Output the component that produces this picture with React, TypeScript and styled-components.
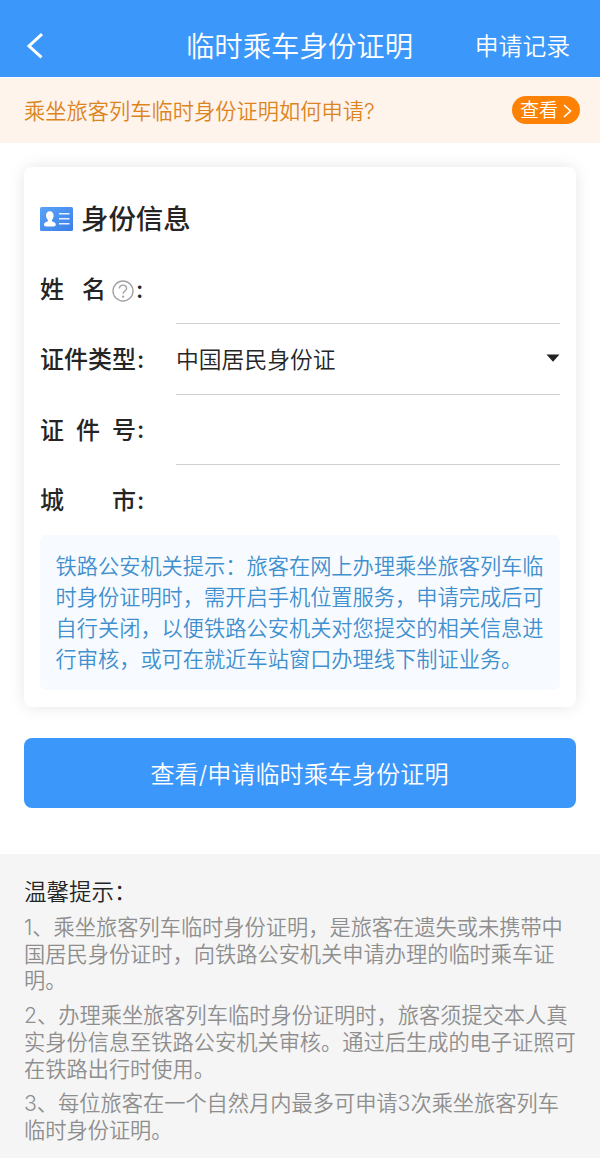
import React from 'react';
import styled, { createGlobalStyle } from 'styled-components';

const GlobalStyle = createGlobalStyle`
  * { box-sizing: border-box; }
  body {
    margin: 0;
    background: #fff;
    color: #252525;
    font-family: Inter, "Noto Sans CJK SC", sans-serif;
    font-weight: 350;
  }
  p, h1, h2 { margin: 0; font-weight: inherit; }
  button { font: inherit; border: 0; cursor: pointer; }
`;

const Page = styled.div`
  width: 600px;
  height: 1158px;
  overflow: hidden;
  display: flex;
  flex-direction: column;
`;

const Header = styled.header`
  flex: none;
  height: 77px;
  padding: 15px 30px 0 26px;
  display: grid;
  grid-template-columns: 123px 1fr 120px;
  align-items: center;
  background: #3b98fa;
  color: #fff;
`;

const HeaderTitle = styled.h1`
  padding-top: 2px;
  font-size: 28.4px;
  line-height: 40px;
  text-align: center;
  white-space: nowrap;
`;

const HeaderLink = styled.a`
  padding-top: 1px;
  font-size: 23.8px;
  line-height: 40px;
  text-align: right;
  white-space: nowrap;
`;

const Notice = styled.section`
  flex: none;
  height: 65px;
  margin-top: 1px;
  padding: 0 20px 1px 24px;
  display: flex;
  align-items: center;
  justify-content: space-between;
  background: #fff4ec;
  color: #dc8420;
  font-size: 21.25px;
  white-space: nowrap;
`;

const NoticeText = styled.p`
  padding-bottom: 1px;
`;

const NoticeButton = styled.button`
  width: 68px;
  height: 28px;
  padding: 1px 8px 0;
  display: flex;
  align-items: center;
  justify-content: space-between;
  border-radius: 14px;
  background: #fd8204;
  color: #fff;
  font-size: 19px;
  line-height: 28px;
`;

const Card = styled.section`
  flex: none;
  margin: 24px 24px 0;
  padding: 34px 16px 16px;
  height: 540px;
  border-radius: 8px;
  background: #fff;
  box-shadow: 0 0 16px rgba(0, 0, 0, 0.1);
`;

const CardTitle = styled.h2`
  height: 36px;
  margin-bottom: 17px;
  display: flex;
  align-items: center;
  gap: 8px;
  font-size: 27.4px;
  font-weight: 500;
  line-height: 36px;
`;

const Row = styled.div`
  height: 70.3px;
  display: grid;
  grid-template-columns: 136px 1fr;
`;

const Label = styled.div`
  width: 106px;
  padding-bottom: 3px;
  display: flex;
  align-items: center;
  font-size: 24px;
  font-weight: 500;
`;

const LabelText = styled.span<{ $width: number }>`
  width: ${(p) => p.$width}px;
  display: flex;
  justify-content: space-between;
`;

const Colon = styled.span`
  padding: 3px 0 0 1px;
`;

const HelpIcon = styled.svg`
  margin: 7px 1px 0 6px;
`;

const Field = styled.div<{ $lined?: boolean }>`
  padding-bottom: 1px;
  display: flex;
  align-items: center;
  justify-content: space-between;
  border-bottom: ${(p) => (p.$lined ? '1.5px solid #d0d0d0' : '0')};
  font-size: 22.8px;
`;

const Hint = styled.div`
  height: 155px;
  padding: 16px 15.5px 14px;
  border-radius: 6px;
  background: #f7fbff;
  color: #408fce;
  font-size: 21.22px;
  line-height: 31px;
`;

const Line = styled.span`
  display: block;
  white-space: nowrap;
`;

const Submit = styled.button`
  flex: none;
  height: 70px;
  margin: 31px 24px 0;
  padding: 0 1px 2px 0;
  border-radius: 8px;
  background: #3b98fa;
  color: #fff;
  font-size: 24.15px;
`;

const Tips = styled.footer`
  flex: 1;
  margin-top: 46px;
  padding: 23px 24px 0;
  background: #f5f5f5;
  color: #8e8e8e;
  font-size: 21.23px;
  line-height: 26.7px;
`;

const TipsTitle = styled.h2`
  margin-bottom: 7px;
  color: #252525;
  font-size: 22.5px;
  line-height: 30px;
`;

const Tip = styled.p`
  margin-bottom: 8px;
`;

const hintLines = [
  '铁路公安机关提示：旅客在网上办理乘坐旅客列车临',
  '时身份证明时，需开启手机位置服务，申请完成后可',
  '自行关闭，以便铁路公安机关对您提交的相关信息进',
  '行审核，或可在就近车站窗口办理线下制证业务。',
];

const tips = [
  [
    '1、乘坐旅客列车临时身份证明，是旅客在遗失或未携带中',
    '国居民身份证时，向铁路公安机关申请办理的临时乘车证',
    '明。',
  ],
  [
    '2、办理乘坐旅客列车临时身份证明时，旅客须提交本人真',
    '实身份信息至铁路公安机关审核。通过后生成的电子证照可',
    '在铁路出行时使用。',
  ],
  ['3、每位旅客在一个自然月内最多可申请3次乘坐旅客列车', '临时身份证明。'],
];

function SpacedLabel({ text, width }: { text: string; width: number }) {
  return (
    <LabelText $width={width}>
      {[...text].map((c) => (
        <span key={c}>{c}</span>
      ))}
    </LabelText>
  );
}

export default function App() {
  return (
    <Page>
      <GlobalStyle />
      <Header>
        <svg width="18" height="26" viewBox="0 0 18 26" fill="none" stroke="#fff" strokeWidth="3">
          <path d="M16 1.2 3 13l12.500 11.400" />
        </svg>
        <HeaderTitle>临时乘车身份证明</HeaderTitle>
        <HeaderLink>申请记录</HeaderLink>
      </Header>
      <Notice>
        <NoticeText>乘坐旅客列车临时身份证明如何申请?</NoticeText>
        <NoticeButton>
          查看
          <svg width="9" height="14" viewBox="0 0 9 14" fill="none" stroke="#fff" strokeWidth="1.7">
            <path d="m1 1 6.500 6L1 13" />
          </svg>
        </NoticeButton>
      </Notice>
      <Card>
        <CardTitle>
          <svg width="33" height="24" viewBox="0 0 33 24">
            <defs>
              <linearGradient id="badge" x1="0" y1="0" x2="1" y2="1">
                <stop offset="0" stopColor="#5aa2f8" />
                <stop offset="1" stopColor="#3b7fe8" />
              </linearGradient>
            </defs>
            <rect width="33" height="24" rx="1.5" fill="url(#badge)" />
            <path
              d="M9.800 4.300c2.400 0 3.800 1.600 3.800 4.200 0 1.900-.7 3.500-1.700 4.400v1.400c1.200.7 3.900 1 3.900 3.300 0 1.300-.9 2-2.200 2H6.200c-1.300 0-2.200-.7-2.200-2 0-2.300 2.700-2.600 3.900-3.300v-1.400c-1-.9-1.900-2.500-1.900-4.400 0-2.600 1.400-4.200 3.800-4.200z"
              fill="#fff"
            />
            <path d="M19 6.700h10.500M19 11.700h10.500M19 16.700h10.500" stroke="#e6f0ff" strokeWidth="1.4" />
          </svg>
          身份信息
        </CardTitle>
        <Row>
          <Label>
            <SpacedLabel text="姓名" width={66} />
            <HelpIcon width="22" height="22" viewBox="0 0 22 22" fill="none" stroke="#a3a3a3" strokeWidth="1.4">
              <circle cx="11" cy="11" r="10" />
              <path d="M7.400 8.600c0-2.100 1.500-3.500 3.600-3.500s3.600 1.300 3.600 3.200c0 2.600-3.500 2.800-3.500 5.400" />
              <circle cx="11.1" cy="16.6" r=".5" />
            </HelpIcon>
            <Colon>:</Colon>
          </Label>
          <Field $lined />
        </Row>
        <Row>
          <Label>
            <SpacedLabel text="证件类型" width={96} />
            <Colon>:</Colon>
          </Label>
          <Field $lined>
            中国居民身份证
            <svg width="14" height="8" viewBox="0 0 14 8">
              <path d="M.5.5h13L7 7.700z" fill="#222" />
            </svg>
          </Field>
        </Row>
        <Row>
          <Label>
            <SpacedLabel text="证件号" width={96} />
            <Colon>:</Colon>
          </Label>
          <Field $lined />
        </Row>
        <Row>
          <Label>
            <SpacedLabel text="城市" width={96} />
            <Colon>:</Colon>
          </Label>
          <Field />
        </Row>
        <Hint>
          {hintLines.map((l) => (
            <Line key={l}>{l}</Line>
          ))}
        </Hint>
      </Card>
      <Submit>查看/申请临时乘车身份证明</Submit>
      <Tips>
        <TipsTitle>温馨提示：</TipsTitle>
        {tips.map((lines) => (
          <Tip key={lines[0]}>
            {lines.map((l) => (
              <Line key={l}>{l}</Line>
            ))}
          </Tip>
        ))}
      </Tips>
    </Page>
  );
}
